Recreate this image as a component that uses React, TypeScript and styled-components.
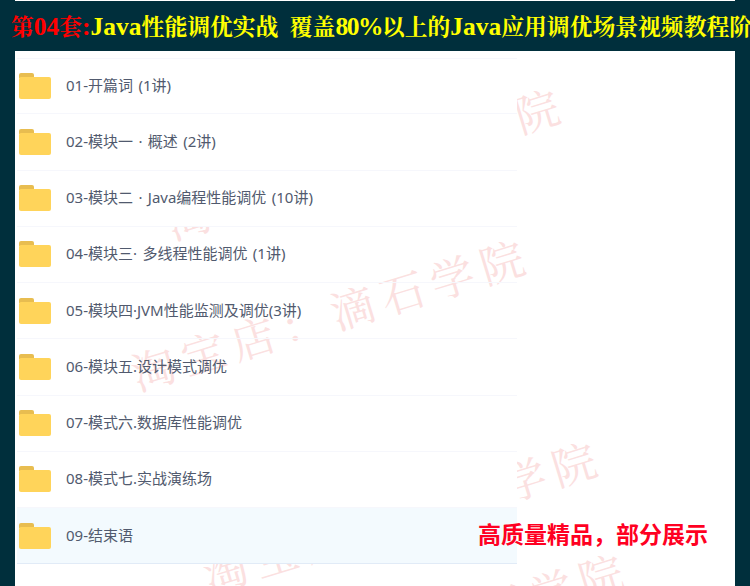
import * as React from 'react'
import styled, {createGlobalStyle} from 'styled-components'

const GlobalStyle = createGlobalStyle`
  html, body {
    margin: 0;
    padding: 0;
    height: 100%;
    overflow: hidden;
    background: #002f3c;
  }
`

const Page = styled.div`
  width: 750px;
  height: 586px;
  overflow: hidden;
  background: #002f3c;
`

const TopStrip = styled.div`
  height: 1px;
  margin: 0 15px;
  background: #fff;
`

const Heading = styled.h1`
  height: 50px;
  margin: 0;
  padding-left: 11px;
  font: bold 22.8px/50px 'Noto Serif CJK SC', 'Noto Sans CJK SC', serif;
  color: #ffff00;
  white-space: nowrap;
`

const Latin = styled.span<{$tight?: boolean}>`
  font-family: 'Liberation Serif', serif;
  font-size: 25.5px;
  letter-spacing: ${p => p.$tight ? '-1.5px' : '0'};
`

const Red = styled.span`
  color: #ff0000;
`

const Panel = styled.div`
  position: relative;
  height: 535px;
  margin: 0 15px;
  padding-top: 7px;
  background: #fff;
  overflow: hidden;
`

const Watermark = styled.div<{$x: number; $y: number}>`
  position: absolute;
  left: ${p => p.$x}px;
  top: ${p => p.$y}px;
  font: 44px/44px 'Noto Serif CJK SC', 'Noto Sans CJK SC', serif;
  letter-spacing: 8px;
  color: #fbe0e0;
  white-space: nowrap;
  transform: rotate(-17deg);
  transform-origin: left center;
`

const List = styled.ul`
  position: relative;
  width: 500px;
  margin: 0 0 0 2px;
  padding: 0;
  list-style: none;
  border-top: 1px solid #f6f7fc;
`

const Row = styled.li<{$clear?: boolean; $active?: boolean}>`
  display: flex;
  align-items: center;
  gap: 15px;
  height: 55.25px;
  padding-left: 2px;
  background: ${p => p.$active ? '#f3fafe' : p.$clear ? 'transparent' : '#fff'};
  border-bottom: 1px solid ${p => p.$active ? '#e1ebf7' : '#f6f7fc'};

  &:first-child {
    height: 54.25px;
  }
`

const Label = styled.span`
  margin-bottom: 2px;
  font: 15px/20px 'Noto Sans', 'Noto Sans CJK SC', sans-serif;
  word-spacing: 1.5px;
  color: #515a6e;
  white-space: nowrap;
`

const Notice = styled.div`
  position: absolute;
  left: 463px;
  top: 464px;
  font: bold 23px/36px 'Noto Sans CJK SC', 'Liberation Sans', sans-serif;
  color: #ff0022;
  white-space: nowrap;
`

function FolderIcon() {
  return (
    <svg width='32' height='26' viewBox='0 0 32 26'>
      <path d='M0 2a2 2 0 0 1 2-2h11a2 2 0 0 1 2 2v3H0z' fill='#e8bd50' />
      <rect x='0' y='4' width='32' height='22' rx='2' fill='#ffd45a' />
    </svg>
  )
}

const rows = [
  {name: '01-开篇词 (1讲)'},
  {name: '02-模块一 · 概述 (2讲)'},
  {name: '03-模块二 · Java编程性能调优 (10讲)'},
  {name: '04-模块三· 多线程性能调优 (1讲)', clear: true},
  {name: '05-模块四·JVM性能监测及调优(3讲)', clear: true},
  {name: '06-模块五.设计模式调优', clear: true},
  {name: '07-模式六.数据库性能调优'},
  {name: '08-模式七.实战演练场'},
  {name: '09-结束语', active: true},
]

const watermarks = [
  {x: 152, y: 149},
  {x: 117, y: 300},
  {x: 189, y: 502},
  {x: 216, y: 614},
]

export default function App() {
  return (
    <Page>
      <GlobalStyle />
      <TopStrip />
      <Heading>
        <Red>第<Latin>04</Latin>套<Latin>:</Latin></Red>
        <Latin>Java</Latin>性能调优实战&nbsp;&nbsp;覆盖<Latin $tight>80%</Latin>以上的<Latin>Java</Latin>应用调优场景视频教程阶段
      </Heading>
      <Panel>
        {watermarks.map(w => (
          <Watermark key={w.y} $x={w.x} $y={w.y}>淘宝店：滴石学院</Watermark>
        ))}
        <List>
          {rows.map(r => (
            <Row key={r.name} $clear={r.clear} $active={r.active}>
              <FolderIcon />
              <Label>{r.name}</Label>
            </Row>
          ))}
        </List>
        <Notice>高质量精品，部分展示</Notice>
      </Panel>
    </Page>
  )
}
